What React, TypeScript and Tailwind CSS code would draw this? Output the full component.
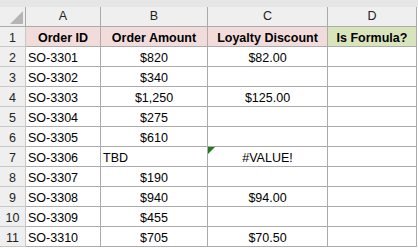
import * as React from "react"

const rows = [
  { id: "SO-3301", amount: "$820", discount: "$82.00" },
  { id: "SO-3302", amount: "$340", discount: "" },
  { id: "SO-3303", amount: "$1,250", discount: "$125.00" },
  { id: "SO-3304", amount: "$275", discount: "" },
  { id: "SO-3305", amount: "$610", discount: "" },
  { id: "SO-3306", amount: "TBD", discount: "#VALUE!", error: true },
  { id: "SO-3307", amount: "$190", discount: "" },
  { id: "SO-3308", amount: "$940", discount: "$94.00" },
  { id: "SO-3309", amount: "$455", discount: "" },
  { id: "SO-3310", amount: "$705", discount: "$70.50" },
]

const gridCols = "grid grid-cols-[26px_75px_107px_120px_89px]"
const cell = "h-5 border-r border-b border-[#ababab] flex items-end pb-[2px] leading-none"
const rowHead =
  "h-5 border-r border-b border-[#c8c8c8] bg-[#efefef] flex items-end justify-center pb-[2px] leading-none text-[#222]"

const App = () => {
  return (
    <div
      className="w-[418px] h-[248px] bg-white text-[12.5px] text-black overflow-hidden"
      style={{ fontFamily: '"Liberation Sans", Arial, sans-serif' }}
    >
      <div className="h-[7px] bg-[#e6e6e6]" />
      {/* column letters */}
      <div className={gridCols + " w-[417px]"}>
        <div className="relative h-5 bg-[#efefef] border-r border-b border-[#ababab]">
          <svg className="absolute left-[10px] top-[4px]" width="13" height="13" viewBox="0 0 13 13">
            <polygon points="13,0 13,13 0,13" fill="#b5b5b5" />
          </svg>
        </div>
        {["A", "B", "C", "D"].map((l) => (
          <div
            key={l}
            className="h-5 bg-[#efefef] border-r border-b border-[#ababab] flex items-center justify-center leading-none text-[#222]"
          >
            {l}
          </div>
        ))}
      </div>
      <div className={gridCols + " w-[417px]"}>
        <div className={rowHead}>1</div>
        <div className={cell + " justify-center bg-[#f2dcdb] font-bold"}>Order ID</div>
        <div className={cell + " justify-center bg-[#f2dcdb] font-bold"}>Order Amount</div>
        <div className={cell + " justify-center bg-[#f2dcdb] font-bold"}>Loyalty Discount</div>
        <div className={cell + " justify-center bg-[#d8e4bc] font-bold"}>Is Formula?</div>
        {rows.map((r, i) => (
          <React.Fragment key={r.id}>
            <div className={rowHead}>{i + 2}</div>
            <div className={cell + " pl-[2px]"}>{r.id}</div>
            <div className={cell + (r.amount === "TBD" ? " pl-[2px]" : " justify-center")}>{r.amount}</div>
            <div className={cell + " justify-center relative"}>
              {r.error && (
                <svg className="absolute left-0 top-0" width="7" height="7" viewBox="0 0 7 7">
                  <polygon points="0,0 7,0 0,7" fill="#1e7b1e" />
                </svg>
              )}
              {r.discount}
            </div>
            <div className={cell} />
          </React.Fragment>
        ))}
      </div>
    </div>
  )
}

export default App
